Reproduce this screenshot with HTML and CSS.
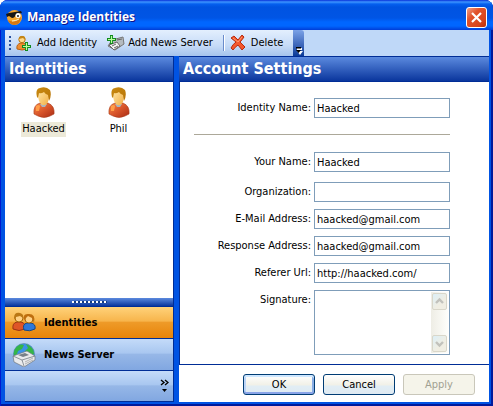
FILE: index.html
```html
<!DOCTYPE html>
<html lang="en">
<head>
<meta charset="utf-8">
<title>Manage Identities</title>
<link rel="stylesheet" href="styles.css">
</head>
<body>
<svg class="defs" aria-hidden="true">
  <defs>
    <linearGradient id="skin" x1="0" y1="0" x2="1" y2="1"><stop offset="0" stop-color="#ffe7a8"/><stop offset="1" stop-color="#f2b045"/></linearGradient>
    <linearGradient id="coat" x1="0" y1="0" x2="1" y2="1"><stop offset="0" stop-color="#f98a48"/><stop offset=".5" stop-color="#d8552a"/><stop offset="1" stop-color="#a82a14"/></linearGradient>
    <linearGradient id="hair" x1="0" y1="0" x2="1" y2="1"><stop offset="0" stop-color="#c98a10"/><stop offset="1" stop-color="#b87408"/></linearGradient>
    <symbol id="person" viewBox="0 0 22 31">
      <path d="M1 27Q0 18 7 16H15Q22 19 21 27L17 29Q11 32 5 29Z" fill="url(#coat)" stroke="#a93c1c" stroke-width=".6"/>
      <path d="M3 19Q6 17 7 19L6 24L3 24Z" fill="#ff9d48"/>
      <path d="M7 17L9 20H12L14 17Z" fill="#aab4bc"/>
      <path d="M5 7Q5 2 11 2Q16 3 16 9Q16 16 12 18H9Q5 15 5 7Z" fill="url(#skin)"/>
      <path d="M4 10Q2 2 7 1Q13-1 17 3Q19 8 16 14L15 8Q12 7 11 5Q8 7 6 6L5 11Z" fill="url(#hair)"/>
    </symbol>
  </defs>
</svg>
<div class="window">
  <header class="titlebar">
    <svg class="app-icon" viewBox="0 0 17 17"><circle cx="8.500" cy="8.500" r="7.500" fill="#f4a52c"/><path d="M2 11Q8 15 15 8Q15 15 8 16Q3 15 2 11Z" fill="#d97812"/><path d="M0 5L3 4L15 2L16 4L10 5Q9 9 6 9L3 7L1 8Z" fill="#161616"/><circle cx="12" cy="6.500" r="2.500" fill="#fff"/><circle cx="12" cy="7" r="1" fill="#222"/><path d="M6 12Q10 12 13 10" stroke="#fff3c4" fill="none"/></svg>
    <h1>Manage Identities</h1>
    <button class="close" aria-label="Close"><svg viewBox="0 0 19 19"><path d="M5 5L14 14M14 5L5 14" stroke="#fff" stroke-width="2.200"/></svg></button>
  </header>
  <nav class="toolbar">
    <div class="tools">
      <span class="grip"></span>
      <button><svg class="i16" viewBox="0 0 16 16"><path d="M1 14Q0 9 5 8H8Q11 9 11 14Q6 16 1 14Z" fill="#ef8d30" stroke="#b66318"/><circle cx="6" cy="4.500" r="3.200" fill="#ffd98a" stroke="#b87612"/><path d="M3 4Q3 1 6 1Q10 1 9 5L7 3Z" fill="#c48616"/><path d="M9 7H12V10H15V13H12V16H9V13H6V10H9Z" fill="#118a1e"/><path d="M10.500 8V15M7 11.500H14" stroke="#b9ff9c" stroke-width="1.200"/></svg><span>Add Identity</span></button>
      <button class="news"><svg class="i18" viewBox="0 0 18 16"><path d="M5 5L16 2L17 9L8 15L1 11Z" fill="#b4babf" stroke="#777"/><path d="M2 10L10 7L13 11L7 15Z" fill="#f4f4f4" stroke="#666"/><path d="M10 5L15 4M5 11L9 9M7 13L11 11" stroke="#666"/><path d="M3 0H6V3H9V6H6V9H3V6H0V3H3Z" fill="#118a1e"/><path d="M4.500 1V8M1 4.500H8" stroke="#b9ff9c" stroke-width="1.200"/></svg><span>Add News Server</span></button>
      <span class="sep"></span>
      <button class="delete"><svg class="i16" viewBox="0 0 16 16"><path d="M1 3L4 1L8 5L12 0L14 2Q12 5 10 7L15 12L12 15L8 10Q5 12 3 15L1 13Q3 9 6 7Z" fill="#f4572c" stroke="#b52b10"/><path d="M3 3L8 7L12 2" stroke="#ff9a70" fill="none"/></svg><span>Delete</span></button>
    </div>
    <button class="overflow" aria-label="Toolbar options"><svg viewBox="0 0 11 26"><path d="M4 18H9V20H4ZM4 21H10L7 25Z" fill="#fff"/><path d="M3 17H8V18.500H3ZM3 20H8L5.500 23Z" fill="#000"/></svg></button>
  </nav>
  <main class="panes">
    <aside class="side">
      <h2>Identities</h2>
      <ul class="people">
        <li class="selected"><svg><use href="#person"/></svg><span>Haacked</span></li>
        <li><svg><use href="#person"/></svg><span>Phil</span></li>
      </ul>
      <div class="splitter"><span></span></div>
      <button class="nav active"><svg viewBox="0 0 24 24"><path d="M1 18Q0 12 5 11H9Q14 12 13 18Q7 21 1 18Z" fill="#df5527" stroke="#9a3415"/><circle cx="7" cy="7" r="4" fill="#ffd185" stroke="#a66a0c"/><path d="M2 7Q2 1 8 2Q12 3 11 7L8 5L4 6L3 9Z" fill="#bb7815"/><path d="M12 19Q10 13 15 12H19Q24 13 23 18Q18 21 12 19Z" fill="#2d78da" stroke="#174785"/><circle cx="17" cy="8" r="4" fill="#ffd185" stroke="#a66a0c"/><path d="M12 10Q10 2 17 3Q24 3 22 12L20 7L16 5L13 8Z" fill="#bf6e0e"/></svg><span>Identities</span></button>
      <button class="nav"><svg viewBox="0 0 24 24"><circle cx="12" cy="11" r="10.500" fill="#3a91e8" stroke="#58869f" stroke-width=".6"/><path d="M3 6Q7 0 12 2L10 6L6 8L4 14Q0 11 3 6M14 1Q22 4 22 11L18 13L13 8L16 5Z" fill="#35b548"/><path d="M1 13L15 8L23 13V17L12 24L2 19Z" fill="#e9eaec" stroke="#70777e" stroke-width=".7"/><path d="M1 13L10 17L23 13M10 17L12 23" fill="none" stroke="#666f78" stroke-width=".7"/><path d="M6 12L13 10L17 12L11 14Z" fill="#788088"/><path d="M13 19L21 15M13 21L21 17" stroke="#999" stroke-width=".7"/></svg><span>News Server</span></button>
      <div class="nav more"><button aria-label="Configure buttons"><svg viewBox="0 0 9 14"><path d="M1 1L4 3.500L1 6M5 1L8 3.500L5 6" fill="none" stroke="#000" stroke-width="1.400"/><path d="M2 10H7L4.500 13Z"/></svg></button></div>
    </aside>
    <section class="account">
      <h2>Account Settings</h2>
      <form class="settings">
        <div class="row first"><label for="identity">Identity Name:</label><input id="identity" type="text" value="Haacked"></div>
        <hr>
        <div class="row name"><label for="name">Your Name:</label><input id="name" type="text" value="Haacked"></div>
        <div class="row"><label for="org">Organization:</label><input id="org" type="text"></div>
        <div class="row"><label for="mail">E-Mail Address:</label><input id="mail" type="text" value="haacked@gmail.com"></div>
        <div class="row"><label for="response">Response Address:</label><input id="response" type="text" value="haacked@gmail.com"></div>
        <div class="row"><label for="url">Referer Url:</label><input id="url" type="text" value="http://haacked.com/"></div>
        <div class="row"><label for="signature">Signature:</label><div class="memo"><textarea id="signature"></textarea><div class="scroll"><span><svg viewBox="0 0 13 15"><path d="M3 9L6.500 5.500L10 9" fill="none" stroke="#c2c2bc" stroke-width="2.400"/></svg></span><span><svg viewBox="0 0 13 15"><path d="M3 6L6.500 9.500L10 6" fill="none" stroke="#c2c2bc" stroke-width="2.400"/></svg></span></div></div></div>
      </form>
      <footer><button class="ok">OK</button><button>Cancel</button><button class="apply" disabled>Apply</button></footer>
    </section>
  </main>
</div>
</body>
</html>
```
FILE: styles.css
```css
* { box-sizing: border-box; }
body { margin: 0; background: #fff; font: 11px/14px "DejaVu Sans Condensed", "Noto Sans", sans-serif; color: #000; }
button { margin: 0; padding: 0; border: 0; background: none; font: inherit; color: inherit; }
h1, h2, ul { margin: 0; padding: 0; }
svg { display: block; flex: none; }
.defs { position: absolute; width: 0; height: 0; }

.window { display: flex; flex-direction: column; min-height: 100vh; padding: 0 4px 4px 5px; border-radius: 8px 8px 0 0; background: #0053e3; box-shadow: inset 1px 0 #0019cf, inset -2px 0 #001a9c, inset 0 -2px #001a9c; }
.titlebar { display: flex; align-items: center; height: 30px; margin: 0 -4px 0 -5px; padding: 4px 6px 0 6px; border-radius: 8px 8px 0 0; background: linear-gradient(#0831d9 0, #3d95ff 2px, #0560ef 4px, #0053e1 7px, #0055e5 18px, #0066ff 22px, #0066ff 26px, #003dd7 30px); }
.app-icon { width: 17px; height: 17px; }
h1 { flex: 1; margin-left: 4px; font: bold 12px/18px "Open Sans", sans-serif; color: #fff; text-shadow: 1px 1px #0f1089; }
.close { width: 21px; height: 21px; border: 1px solid #fff; border-radius: 3px; background: linear-gradient(135deg, #f0a088, #e1532b 35%, #d8441c 75%, #b92f08); }
.close svg { width: 19px; height: 19px; }

.toolbar { display: flex; height: 26px; background: #bfd8f8; }
.tools { display: flex; align-items: center; width: 288px; padding-left: 4px; border-radius: 2px 0 0 2px; background: linear-gradient(#e3effe, #c6dbf7 60%, #a5c3ec); }
.tools button { display: flex; align-items: center; gap: 5px; white-space: nowrap; }
.grip { width: 2px; height: 14px; margin-right: 5px; background: repeating-linear-gradient(#274f9c 0 2px, transparent 2px 4px); }
.i16 { width: 16px; height: 16px; }
.i18 { width: 18px; height: 16px; }
.tools .news { margin-left: 10px; gap: 3px; }
.sep { width: 2px; height: 16px; margin: 0 5px 0 10px; border-left: 1px solid #6a8ccb; border-right: 1px solid #fff; }
.overflow { width: 11px; border-radius: 0 3px 0 0; background: linear-gradient(#7ba2e7, #3a64b8 60%, #0b3a97); }
.overflow svg { width: 11px; height: 26px; }

.panes { flex: 1; display: grid; grid-template-columns: 169px 1fr; gap: 5px; }
h2 { height: 26px; padding-left: 4px; border-top: 1px solid #002d96; border-bottom: 1px solid #002d96; background: linear-gradient(#5b8ade, #0a369d); font: bold 16px/23px "DejaVu Sans Condensed", sans-serif; color: #fff; }
.side { display: flex; flex-direction: column; border-right: 1px solid #002d96; }
.people { flex: 1; display: flex; align-items: flex-start; padding: 5px 0 0 1px; background: #fff; list-style: none; }
.people li { display: flex; flex-direction: column; align-items: center; gap: 4px; width: 75px; }
.people svg { width: 22px; height: 31px; }
.people span { padding: 0 1px 1px; }
.people .selected span { background: #ece9d8; }
.splitter { display: flex; align-items: center; justify-content: center; height: 8px; background: linear-gradient(#5b8ade, #0a369d); }
.splitter span { width: 35px; height: 2px; background: repeating-linear-gradient(90deg, #fff 0 2px, #143c80 2px 4px); }
.nav { display: flex; align-items: center; gap: 8px; height: 32px; padding-left: 7px; border-top: 1px solid #002d96; background: linear-gradient(#c4dbf9, #a9c7f0 45%, #96b7e7 50%, #81a7e1); font-weight: bold; text-align: left; }
.nav svg { width: 24px; height: 24px; }
.active { background: linear-gradient(#ffd27a, #f7b54c 45%, #ee9a28 50%, #e8840a); }
.more { justify-content: flex-end; padding-right: 4px; border-bottom: 1px solid #002d96; }
.more svg { width: 9px; height: 14px; }

.account { display: flex; flex-direction: column; background: #fff; }
.settings { flex: 1; display: flex; flex-direction: column; gap: 7px; padding: 16px 39px 9px 14px; border-left: 1px solid #002d96; border-bottom: 1px solid #002d96; }
.row { display: grid; grid-template-columns: 1fr 136px; column-gap: 3px; }
.row label { line-height: 20px; text-align: right; }
.row input { width: 100%; height: 20px; padding: 0 2px; border: 1px solid #7f9db9; background: #fff; font: inherit; }
hr { width: 100%; height: 2px; margin: 9px 0; border: 0; border-top: 1px solid #aca899; }
.name { margin-bottom: 3px; }
.memo { display: flex; height: 65px; padding: 1px; border: 1px solid #7f9db9; }
textarea { flex: 1; min-width: 0; padding: 1px; border: 0; outline: 0; background: #fff; resize: none; font: inherit; }
.scroll { display: flex; flex-direction: column; justify-content: space-between; width: 17px; padding: 1px; background: linear-gradient(90deg, #eeede5, #fefefb); }
.scroll span { border: 1px solid #d9d7ca; border-radius: 2px; background: linear-gradient(135deg, #dceff7, #f0eee3 60%); }
.scroll svg { width: 13px; height: 15px; }
footer { display: flex; justify-content: flex-end; gap: 8px; height: 37px; padding: 9px 14px 0 0; }
footer button { width: 72px; height: 21px; border: 1px solid #003c74; border-radius: 3px; background: linear-gradient(#fff, #f2f1e8 50%, #e1edf4 60%, #dfeaf2); }
footer .ok { box-shadow: inset 0 2px #cee7ff, inset 0 -2px #89a4e8, inset 2px 0 #bcd4f6, inset -2px 0 #89ade4; }
footer .apply { border-color: #c9c7ba; background: #f5f4ea; color: #a1a192; }
```
